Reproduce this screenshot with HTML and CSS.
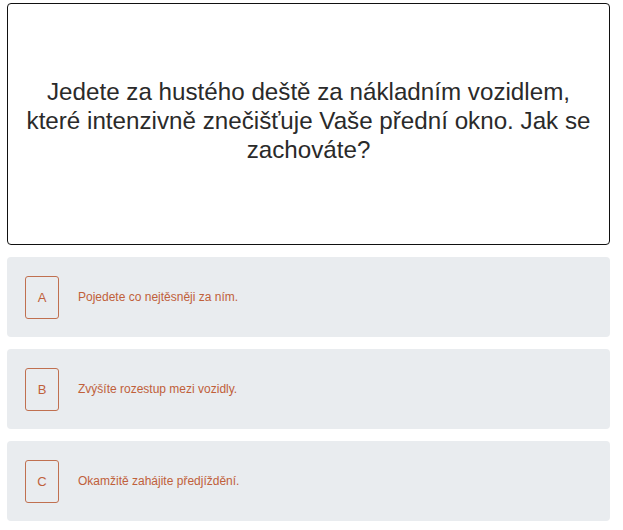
FILE: index.html
```html
<!DOCTYPE html>
<html lang="cs">

<head>
    <meta charset="UTF-8">
    <meta name="viewport" content="width=device-width, initial-scale=1.0">
    <title>Otázka</title>
    <link rel="stylesheet" href="styles.css">
</head>

<body>
    <div class="quiz">
        <div class="question">
            <p>Jedete za hustého deště za nákladním vozidlem, které intenzivně znečišťuje Vaše přední okno. Jak se zachováte?</p>
        </div>
        <div class="answers">
            <div class="answer">
                <span class="letter">A</span>
                <p>Pojedete co nejtěsněji za ním.</p>
            </div>
            <div class="answer">
                <span class="letter">B</span>
                <p>Zvýšíte rozestup mezi vozidly.</p>
            </div>
            <div class="answer">
                <span class="letter">C</span>
                <p>Okamžitě zahájite předjíždění.</p>
            </div>
        </div>
    </div>
</body>

</html>
```

FILE: styles.css
```css
* {
    padding: 0;
    margin: 0;
    box-sizing: border-box;
}

body {
    font-family: "Liberation Sans", Arial, sans-serif;
    background-color: #fff;
}

.quiz {
    width: 603px;
    margin: 3px 0 0 7px;
}

.question {
    height: 242px;
    border: 1px solid #111;
    border-radius: 4px;
    display: flex;
    align-items: center;
    justify-content: center;
    padding: 0 12px 8px;
}

.question p {
    font-size: 24.2px;
    line-height: 29px;
    color: #2a2a2a;
    text-align: center;
}

.answers {
    margin-top: 12px;
    display: flex;
    flex-direction: column;
    gap: 12px;
}

.answer {
    height: 80px;
    background-color: #e9ecef;
    border-radius: 4px;
    display: flex;
    align-items: center;
    padding: 0 18px;
}

.letter {
    width: 34px;
    height: 43px;
    border: 1px solid #c07050;
    border-radius: 3px;
    display: flex;
    align-items: center;
    justify-content: center;
    font-size: 13px;
    color: #c0603a;
}

.answer p {
    margin-left: 19px;
    font-size: 12px;
    color: #c0603a;
}
```
